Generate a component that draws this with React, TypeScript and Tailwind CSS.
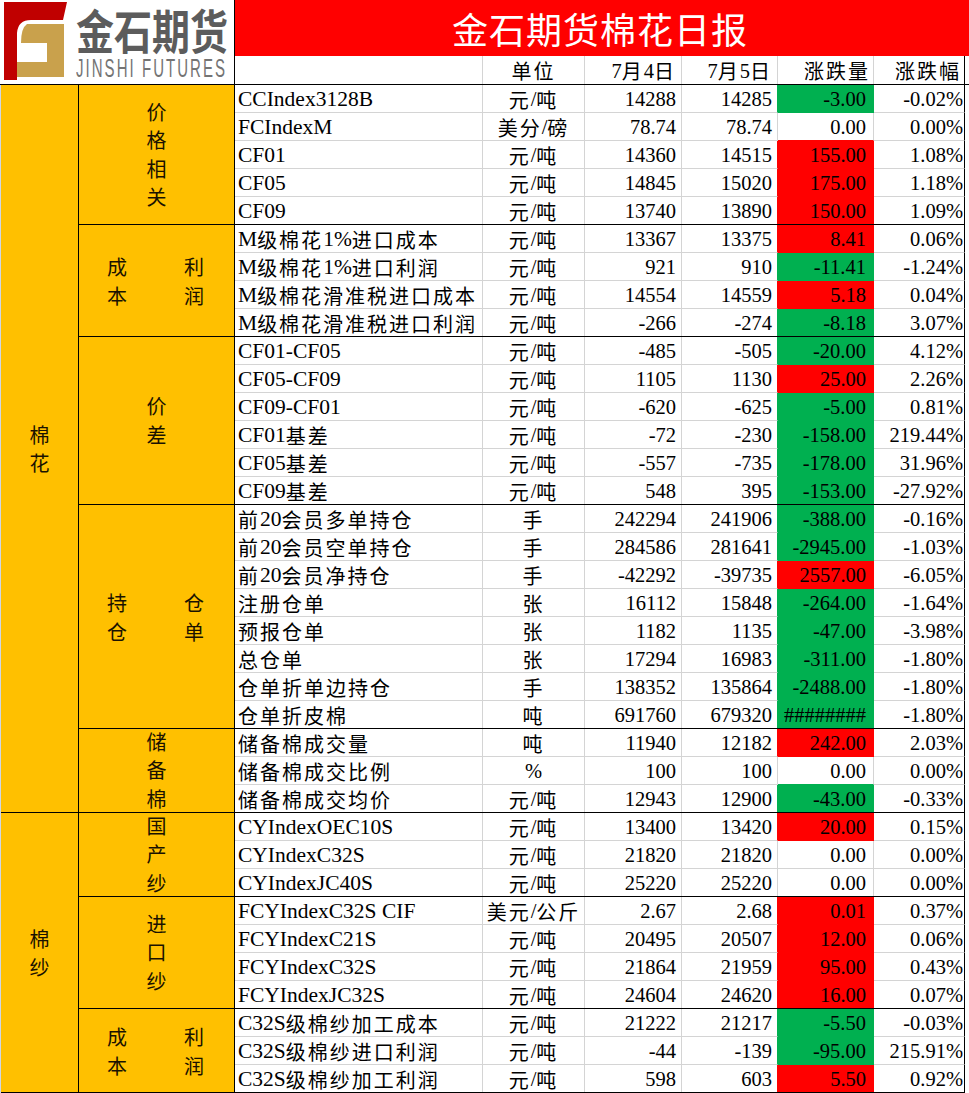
import React from "react";

type C = "g" | "r" | "";
type Row = [string, string, string, string, string, C, string];
type Group = { label: React.ReactNode; rows: Row[] };

const fill: Record<C, string> = { g: "bg-[#00b050]", r: "bg-[#ff0000]", "": "bg-white" };
const bcolB: Record<C, string> = { g: "border-b-[#00b050]", r: "border-b-[#ff0000]", "": "border-b-[#d4d4d4]" };
const bcolR: Record<C, string> = { g: "border-r-[#00b050]", r: "border-r-[#ff0000]", "": "border-r-[#d4d4d4]" };

const CJK = /([\u3000-\u9fff\uff00-\uffef]+)/;
function T({ s }: { s: string }) {
  const parts = s.split(CJK);
  return (
    <>
      {parts.map((p, i) =>
        i % 2 === 1 ? (
          <span key={i} className="font-['Noto_Sans_CJK_SC',sans-serif] text-[20px] tracking-[2px]">
            {p}
          </span>
        ) : (
          <span key={i}>{p}</span>
        )
      )}
    </>
  );
}

function Vert({ chars }: { chars: string[] }) {
  return (
    <div className="flex h-full flex-col items-center justify-center leading-[28.5px]">
      {chars.map((c, i) => (
        <span key={i}>{c}</span>
      ))}
    </div>
  );
}

function Two({ l, r }: { l: string[]; r: string[] }) {
  return (
    <div className="flex h-full items-center justify-between pl-[28px] pr-[30px]">
      <div className="flex flex-col leading-[29px]">
        {l.map((c, i) => (
          <span key={i}>{c}</span>
        ))}
      </div>
      <div className="flex flex-col leading-[29px]">
        {r.map((c, i) => (
          <span key={i}>{c}</span>
        ))}
      </div>
    </div>
  );
}

const cotton: Group[] = [
  {
    label: <Vert chars={["价", "格", "相", "关"]} />,
    rows: [
      ["CCIndex3128B", "元/吨", "14288", "14285", "-3.00", "g", "-0.02%"],
      ["FCIndexM", "美分/磅", "78.74", "78.74", "0.00", "", "0.00%"],
      ["CF01", "元/吨", "14360", "14515", "155.00", "r", "1.08%"],
      ["CF05", "元/吨", "14845", "15020", "175.00", "r", "1.18%"],
      ["CF09", "元/吨", "13740", "13890", "150.00", "r", "1.09%"],
    ],
  },
  {
    label: <Two l={["成", "本"]} r={["利", "润"]} />,
    rows: [
      ["M级棉花1%进口成本", "元/吨", "13367", "13375", "8.41", "r", "0.06%"],
      ["M级棉花1%进口利润", "元/吨", "921", "910", "-11.41", "g", "-1.24%"],
      ["M级棉花滑准税进口成本", "元/吨", "14554", "14559", "5.18", "r", "0.04%"],
      ["M级棉花滑准税进口利润", "元/吨", "-266", "-274", "-8.18", "g", "3.07%"],
    ],
  },
  {
    label: <Vert chars={["价", "差"]} />,
    rows: [
      ["CF01-CF05", "元/吨", "-485", "-505", "-20.00", "g", "4.12%"],
      ["CF05-CF09", "元/吨", "1105", "1130", "25.00", "r", "2.26%"],
      ["CF09-CF01", "元/吨", "-620", "-625", "-5.00", "g", "0.81%"],
      ["CF01基差", "元/吨", "-72", "-230", "-158.00", "g", "219.44%"],
      ["CF05基差", "元/吨", "-557", "-735", "-178.00", "g", "31.96%"],
      ["CF09基差", "元/吨", "548", "395", "-153.00", "g", "-27.92%"],
    ],
  },
  {
    label: <Two l={["持", "仓"]} r={["仓", "单"]} />,
    rows: [
      ["前20会员多单持仓", "手", "242294", "241906", "-388.00", "g", "-0.16%"],
      ["前20会员空单持仓", "手", "284586", "281641", "-2945.00", "g", "-1.03%"],
      ["前20会员净持仓", "手", "-42292", "-39735", "2557.00", "r", "-6.05%"],
      ["注册仓单", "张", "16112", "15848", "-264.00", "g", "-1.64%"],
      ["预报仓单", "张", "1182", "1135", "-47.00", "g", "-3.98%"],
      ["总仓单", "张", "17294", "16983", "-311.00", "g", "-1.80%"],
      ["仓单折单边持仓", "手", "138352", "135864", "-2488.00", "g", "-1.80%"],
      ["仓单折皮棉", "吨", "691760", "679320", "########", "g", "-1.80%"],
    ],
  },
  {
    label: <Vert chars={["储", "备", "棉"]} />,
    rows: [
      ["储备棉成交量", "吨", "11940", "12182", "242.00", "r", "2.03%"],
      ["储备棉成交比例", "%", "100", "100", "0.00", "", "0.00%"],
      ["储备棉成交均价", "元/吨", "12943", "12900", "-43.00", "g", "-0.33%"],
    ],
  },
];

const yarn: Group[] = [
  {
    label: <Vert chars={["国", "产", "纱"]} />,
    rows: [
      ["CYIndexOEC10S", "元/吨", "13400", "13420", "20.00", "r", "0.15%"],
      ["CYIndexC32S", "元/吨", "21820", "21820", "0.00", "", "0.00%"],
      ["CYIndexJC40S", "元/吨", "25220", "25220", "0.00", "", "0.00%"],
    ],
  },
  {
    label: <Vert chars={["进", "口", "纱"]} />,
    rows: [
      ["FCYIndexC32S CIF", "美元/公斤", "2.67", "2.68", "0.01", "r", "0.37%"],
      ["FCYIndexC21S", "元/吨", "20495", "20507", "12.00", "r", "0.06%"],
      ["FCYIndexC32S", "元/吨", "21864", "21959", "95.00", "r", "0.43%"],
      ["FCYIndexJC32S", "元/吨", "24604", "24620", "16.00", "r", "0.07%"],
    ],
  },
  {
    label: <Two l={["成", "本"]} r={["利", "润"]} />,
    rows: [
      ["C32S级棉纱加工成本", "元/吨", "21222", "21217", "-5.50", "g", "-0.03%"],
      ["C32S级棉纱进口利润", "元/吨", "-44", "-139", "-95.00", "g", "215.91%"],
      ["C32S级棉纱加工利润", "元/吨", "598", "603", "5.50", "r", "0.92%"],
    ],
  },
];

function GroupBlock({ g }: { g: Group }) {
  const n = g.rows.length;
  return (
    <div className="flex border-b border-black" style={{ height: n * 28 }}>
      <div className="w-[156px] shrink-0 border-r border-black bg-[#ffc000] font-['Noto_Sans_CJK_SC',sans-serif] text-[20px] text-[#1a1200]">
        {g.label}
      </div>
      <div className="flex w-[730px] flex-col">
        {g.rows.map((r, i) => {
          const last = i === n - 1;
          const c = r[5];
          const next: C = last ? "" : g.rows[i + 1][5];
          const gridB = last ? "" : "border-b";
          const gb = c ? bcolB[c] : next ? bcolB[next] : bcolB[""];
          return (
            <div key={i} className={`flex ${last ? "h-[27px]" : "h-[28px]"}`}>
              <div className={`flex w-[248px] items-center border-r ${gridB} border-[#d4d4d4] pl-[3px] pt-[2px] text-[21.5px] whitespace-nowrap`}>
                <T s={r[0]} />
              </div>
              <div className={`flex w-[102px] items-center justify-center border-r ${gridB} border-[#d4d4d4] pt-[2px] whitespace-nowrap`}>
                <T s={r[1]} />
              </div>
              <div className={`flex w-[97px] items-center justify-end border-r ${gridB} border-[#d4d4d4] pr-[5px] pt-[2px]`}>
                {r[2]}
              </div>
              <div className={`flex w-[96px] items-center justify-end border-r ${gridB} border-b-[#d4d4d4] ${bcolR[c]} pr-[5px] pt-[2px]`}>
                {r[3]}
              </div>
              <div className={`flex w-[96px] items-center justify-end border-r ${gridB} ${gb} ${c ? bcolR[c] : bcolR[""]} ${fill[c]} pr-[7px] pt-[2px]`}>
                {r[4]}
              </div>
              <div className={`flex w-[91px] items-center justify-end border-r border-r-black ${gridB} border-b-[#d4d4d4] pr-[1px] pt-[2px]`}>
                {r[6]}
              </div>
            </div>
          );
        })}
      </div>
    </div>
  );
}

function Logo() {
  return (
    <div className="flex h-[84px] w-[234px] bg-white">
      <svg width="73" height="84" viewBox="0 0 73 84" className="shrink-0">
        <path d="M4,2 H67 L63,20 H31 Q18,20 17,33 V80 H4 Z" fill="#c00000" />
        <path d="M27,24 H64 V77 H17 V62 H47 V43 H21 Q21,28 27,24 Z" fill="#c9a14c" />
      </svg>
      <div className="ml-[3px] flex flex-col pt-[6px]">
        <div className="h-[38px] origin-top scale-y-[1.22] font-['Noto_Sans_CJK_SC',sans-serif] text-[38px] leading-none font-bold whitespace-nowrap text-[#5c5c5c]">
          金石期货
        </div>
        <div className="mt-[12px] h-[25px] origin-left scale-x-[0.6] font-['Liberation_Sans',sans-serif] text-[25px] leading-none tracking-[3.4px] whitespace-nowrap text-[#747474]">
          JINSHI FUTURES
        </div>
      </div>
    </div>
  );
}

export default function App() {
  return (
    <div className="relative h-[1093px] w-[969px] overflow-hidden bg-white font-['Liberation_Serif','Noto_Sans_CJK_SC',serif] text-[20.5px] text-black">
      <div className="flex h-[85px] border-b border-black">
        <div className="h-[84px] w-[235px] shrink-0 overflow-hidden border-r border-black">
          <Logo />
        </div>
        <div className="flex w-[734px] flex-col">
          <div className="flex h-[56px] items-center justify-center bg-[#ff0000] pr-[4px] font-['Noto_Sans_CJK_SC',sans-serif] text-[36px] tracking-[1px] text-white">
            金石期货棉花日报
          </div>
          <div className="flex h-[28px]">
            <div className="w-[248px] border-r border-[#d4d4d4]" />
            <div className="flex w-[102px] items-center justify-center border-r border-[#d4d4d4] pt-[2px]">
              <T s="单位" />
            </div>
            <div className="flex w-[97px] items-center justify-end border-r border-[#d4d4d4] pr-[5px] pt-[2px]">
              <T s="7月4日" />
            </div>
            <div className="flex w-[96px] items-center justify-end border-r border-[#d4d4d4] pr-[5px] pt-[2px]">
              <T s="7月5日" />
            </div>
            <div className="flex w-[96px] items-center justify-end border-r border-[#d4d4d4] pr-[3px] pt-[2px]">
              <T s="涨跌量" />
            </div>
            <div className="flex w-[91px] items-center justify-end border-r border-black pr-[3px] pt-[2px]">
              <T s="涨跌幅" />
            </div>
          </div>
        </div>
      </div>
      <div className="flex">
        <div className="flex w-[79px] shrink-0 flex-col border-l border-r border-l-[#d0d7e5] border-r-black bg-[#ffc000] font-['Noto_Sans_CJK_SC',sans-serif] text-[20px] text-[#1a1200]">
          <div className="flex h-[728px] flex-col items-center justify-center border-b border-black leading-[28px]">
            <span>棉</span>
            <span>花</span>
          </div>
          <div className="flex h-[280px] flex-col items-center justify-center border-b border-black leading-[28px]">
            <span>棉</span>
            <span>纱</span>
          </div>
        </div>
        <div className="flex w-[886px] flex-col">
          {cotton.map((g, i) => (
            <GroupBlock key={"c" + i} g={g} />
          ))}
          {yarn.map((g, i) => (
            <GroupBlock key={"y" + i} g={g} />
          ))}
        </div>
      </div>
    </div>
  );
}
